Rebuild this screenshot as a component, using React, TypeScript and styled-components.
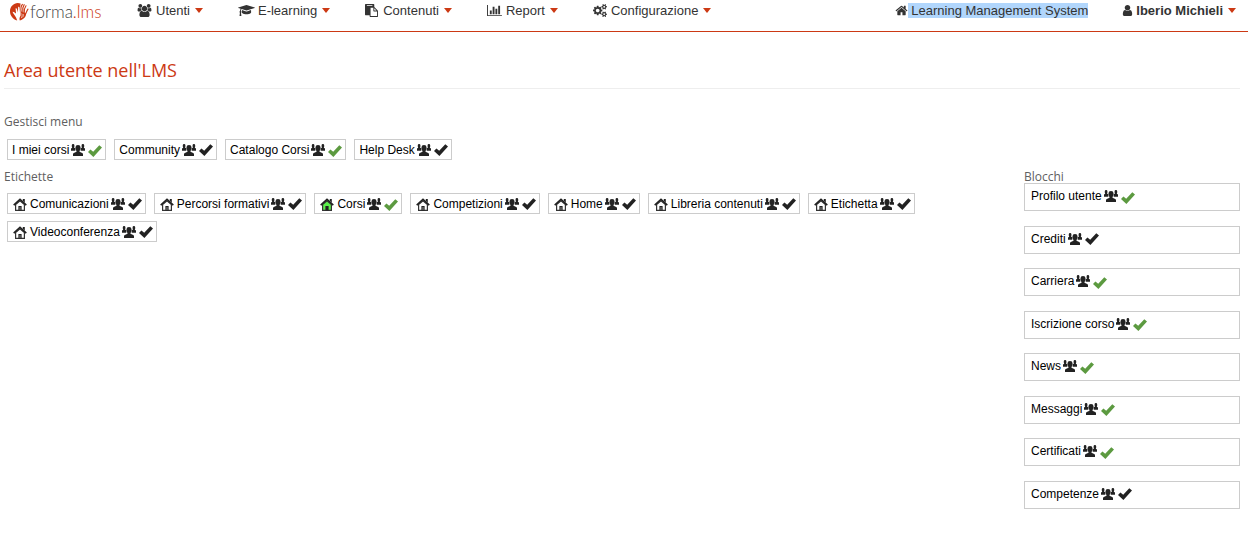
import React from "react";
import styled, { createGlobalStyle } from "styled-components";

const accent = "#cc3914";
const ink = "#333333";

const GlobalStyle = createGlobalStyle`
  * { box-sizing: border-box; }
  body { margin: 0; background: #fff; color: #000; font: 12px/16px "Liberation Sans", Arial, sans-serif; }
  button { font: inherit; color: inherit; background: none; border: 0; padding: 0; cursor: pointer; }
  a { color: inherit; text-decoration: none; }
  ul { list-style: none; margin: 0; padding: 0; }
  svg { display: block; flex: none; }
`;

const Header = styled.header`
  display: flex;
  align-items: flex-start;
  height: 32px;
  padding: 0 12px 0 8px;
  border-bottom: 1px solid ${accent};
  color: ${ink};
  font-size: 13px;
  line-height: 15px;
`;

const Logo = styled.a`
  display: flex;
  align-items: center;
  width: 129px;
  height: 24px;
  font: 300 17px/20px Lato, sans-serif;
  color: #444;
`;

const LogoAccent = styled.span`
  color: ${accent};
`;

const Nav = styled.nav`
  display: flex;
  gap: 35px;
  flex: 1;
  padding-top: 3px;
`;

const MenuButton = styled.button<{ $bold?: boolean }>`
  display: flex;
  align-items: center;
  height: 15px;
  font-weight: ${(p) => (p.$bold ? 700 : 400)};
  white-space: nowrap;
`;

const MenuLabel = styled.span<{ $gap: number }>`
  padding: 0 5px 0 ${(p) => p.$gap}px;
`;

const Caret = styled.span`
  border: 4px solid transparent;
  border-top: 5px solid ${accent};
  border-bottom: 0;
`;

const UserArea = styled.div`
  display: flex;
  gap: 33px;
  padding-top: 3px;
`;

const PlatformLink = styled.a`
  display: flex;
  align-items: center;
  height: 15px;
  white-space: nowrap;
`;

const Selected = styled.span`
  background: #b1d6fc;
  padding-left: 3px;
`;

const Main = styled.main`
  padding: 27px 8px 16px 4px;
`;

const Title = styled.h1`
  margin: 0 0 24px;
  padding-bottom: 7px;
  border-bottom: 1px solid #eee;
  color: ${accent};
  font: 400 18px/22px "Open Sans", sans-serif;
`;

const SectionTitle = styled.h2`
  margin: 0;
  color: #606060;
  font: 400 12px/17px "Open Sans", sans-serif;
`;

const Columns = styled.div`
  display: flex;
  align-items: flex-start;
  justify-content: space-between;
  padding-top: 8px;
`;

const LabelsColumn = styled.section`
  width: 75%;
`;

const BlocksColumn = styled.section`
  width: 216px;
`;

const ChipList = styled.ul<{ $top: number }>`
  display: flex;
  flex-wrap: wrap;
  gap: 7px 8px;
  padding: ${(p) => p.$top}px 3px 0;
`;

const Chip = styled.li`
  display: flex;
  align-items: center;
  height: 21px;
  padding: 0 3px 0 4px;
  border: 1px solid #ccc;
  white-space: nowrap;
`;

const BlockList = styled.ul`
  display: flex;
  flex-direction: column;
  justify-content: space-between;
  min-height: 326px;
  margin-top: -2px;
`;

const Block = styled.li`
  display: flex;
  align-items: center;
  height: 28px;
  padding: 0 6px 2px;
  border: 1px solid #ccc;
`;

const HomeSlot = styled.span`
  padding: 2px 3px 0 1px;
`;

const ItemLabel = styled.span`
  padding-right: 2px;
`;

const IconButton = styled.button<{ $low?: boolean }>`
  display: flex;
  margin-right: 3px;
  padding-top: ${(p) => (p.$low ? 3 : 0)}px;

  &:last-child {
    margin-right: 0;
  }
`;

const glyphs = {
  users: {
    w: 2048,
    d: "M657 896q-162 5-265 128h-134q-82 0-138-40.5t-56-118.5q0-353 124-353 6 0 43.5 21t97.5 42.5 119 21.5q67 0 133-23-5 37-5 66 0 139 81 256zm1071 637q0 120-73 189.5t-194 69.5h-874q-121 0-194-69.5t-73-189.5q0-53 3.5-103.5t14-109 26.5-108.5 43-97.5 62-81 85.5-53.5 111.5-20q10 0 43 21.5t73 48 107 48 135 21.5 135-21.5 107-48 73-48 43-21.5q61 0 111.5 20t85.5 53.5 62 81 43 97.5 26.5 108.5 14 109 3.5 103.5zm-1024-1277q0 106-75 181t-181 75-181-75-75-181 75-181 181-75 181 75 75 181zm704 384q0 159-112.5 271.5t-271.5 112.5-271.5-112.5-112.5-271.5 112.5-271.5 271.5-112.5 271.5 112.5 112.5 271.5zm576 225q0 78-56 118.5t-138 40.5h-134q-103-123-265-128 81-117 81-256 0-29-5-66 66 23 133 23 59 0 119-21.5t97.5-42.5 43.5-21q124 0 124 353zm-128-609q0 106-75 181t-181 75-181-75-75-181 75-181 181-75 181 75 75 181z",
  },
  cap: {
    w: 2304,
    d: "M1774 836l18 316q4 69-82 128t-235 93.5-323 34.5-323-34.5-235-93.5-82-128l18-316 574 181q22 7 48 7t48-7zm530-324q0 23-22 31l-1120 352q-4 1-10 1t-10-1l-652-206q-43 34-71 111.5t-34 178.5q63 36 63 109 0 69-58 107l58 433q2 14-8 25-9 11-24 11h-192q-15 0-24-11-10-11-8-25l58-433q-58-38-58-107 0-73 65-111 11-207 98-330l-333-104q-22-8-22-31t22-31l1120-352q4-1 10-1t10 1l1120 352q22 8 22 31z",
  },
  paste: {
    w: 1792,
    d: "M768 1664h896v-640h-416q-40 0-68-28t-28-68v-416h-384v1152zm256-1440v-64q0-13-9.500-22.500t-22.500-9.500h-704q-13 0-22.500 9.500t-9.500 22.500v64q0 13 9.500 22.500t22.500 9.500h704q13 0 22.500-9.500t9.500-22.500zm256 672h299l-299-299v299zm512 128v672q0 40-28 68t-68 28h-960q-40 0-68-28t-28-68v-160h-544q-40 0-68-28t-28-68v-1344q0-40 28-68t68-28h1088q40 0 68 28t28 68v328q21 13 36 28l408 408q28 28 48 76t20 88z",
  },
  chart: {
    w: 2048,
    d: "M640 896v512h-256v-512h256zm384-512v1024h-256v-1024h256zm1024 1152v128h-2048v-1536h128v1408h1920zm-640-896v768h-256v-768h256zm384-384v1152h-256v-1152h256z",
  },
  cogs: {
    w: 1920,
    d: "M896 896q0-106-75-181t-181-75-181 75-75 181 75 181 181 75 181-75 75-181zm768 512q0-52-38-90t-90-38-90 38-38 90q0 53 37.5 90.5t90.5 37.5 90.5-37.5 37.5-90.5zm0-1024q0-52-38-90t-90-38-90 38-38 90q0 53 37.5 90.5t90.5 37.5 90.5-37.5 37.5-90.5zm-384 421v185q0 10-7 19.5t-16 10.5l-155 24q-11 35-32 76 34 48 90 115 7 11 7 20 0 12-7 19-23 30-82.5 89.5t-78.5 59.5q-11 0-21-7l-115-90q-37 19-77 31-11 108-23 155-7 24-30 24h-186q-11 0-20-7.5t-10-17.5l-23-153q-34-10-75-31l-118 89q-7 7-20 7-11 0-21-8-144-133-144-160 0-9 7-19 10-14 41-53t47-61q-23-44-35-82l-152-24q-10-1-17-9.5t-7-19.5v-185q0-10 7-19.5t16-10.5l155-24q11-35 32-76-34-48-90-115-7-11-7-20 0-12 7-20 22-30 82-89t79-59q11 0 21 7l115 90q34-18 77-32 11-108 23-154 7-24 30-24h186q11 0 20 7.5t10 17.5l23 153q34 10 75 31l118-89q8-7 20-7 11 0 21 8 144 133 144 160 0 8-7 19-12 16-42 54t-45 60q23 48 34 82l152 23q10 2 17 10.5t7 19.5zm640 533v140q0 16-149 31-12 27-30 52 51 113 51 138 0 4-4 7-122 71-124 71-8 0-46-47t-52-68q-20 2-30 2t-30-2q-14 21-52 68t-46 47q-2 0-124-71-4-3-4-7 0-25 51-138-18-25-30-52-149-15-149-31v-140q0-16 149-31 13-29 30-52-51-113-51-138 0-4 4-7 4-2 35-20t59-34 30-16q8 0 46 46.5t52 67.5q20-2 30-2t30 2q51-71 92-112l6-2q4 0 124 70 4 3 4 7 0 25-51 138 17 23 30 52 149 15 149 31zm0-1024v140q0 16-149 31-12 27-30 52 51 113 51 138 0 4-4 7-122 71-124 71-8 0-46-47t-52-68q-20 2-30 2t-30-2q-14 21-52 68t-46 47q-2 0-124-71-4-3-4-7 0-25 51-138-18-25-30-52-149-15-149-31v-140q0-16 149-31 13-29 30-52-51-113-51-138 0-4 4-7 4-2 35-20t59-34 30-16q8 0 46 46.5t52 67.5q20-2 30-2t30 2q51-71 92-112l6-2q4 0 124 70 4 3 4 7 0 25-51 138 17 23 30 52 149 15 149 31z",
  },
  home: {
    w: 1792,
    d: "M1472 992v480q0 26-19 45t-45 19h-384v-384h-256v384h-384q-26 0-45-19t-19-45v-480q0-1 .5-3t.5-3l575-474 575 474q1 2 1 6zm223-69l-62 74q-8 9-21 11h-3q-13 0-21-7l-692-577-692 577q-12 8-24 7-13-2-21-11l-62-74q-8-10-7-23.5t11-21.5l719-599q32-26 76-26t76 26l244 204v-195q0-14 9-23t23-9h192q14 0 23 9t9 23v408l219 182q10 8 11 21.5t-7 23.5z",
  },
  user: {
    w: 1792,
    d: "M1536 1399q0 109-62.5 187t-150.5 78h-854q-88 0-150.5-78t-62.5-187q0-85 8.5-160.5t31.5-152 58.5-131 94-89 134.5-34.5q131 128 313 128t313-128q76 0 134.5 34.5t94 89 58.5 131 31.5 152 8.5 160.5zm-256-887q0 159-112.5 271.5t-271.5 112.5-271.5-112.5-112.5-271.5 112.5-271.5 271.5-112.5 271.5 112.5 112.5 271.5z",
  },
};

type GlyphName = keyof typeof glyphs;

const Glyph = ({ name }: { name: GlyphName }) => (
  <svg width={Math.round((glyphs[name].w / 1792) * 13)} height="13" viewBox={`0 0 ${glyphs[name].w} 1792`} fill="currentColor" aria-hidden="true">
    <path d={glyphs[name].d} />
  </svg>
);

const LogoMark = () => (
  <svg width="22" height="20" viewBox="0 0 22 20" aria-hidden="true">
    <path d="M12.600 1.600C7.500-.6 2 3.600 2 9.200c0 4.600 3 8 7.200 9.200C8.600 16.600 7.800 15 6.800 13.600 5.800 12.200 4.800 11 4.600 9.800c.8-.4 2 .6 3.400 1.800L7.600 6.400c.8-.5 1.300.3 1.500 1.200l.7 3L10.200 5c.8-.5 1.400.2 1.400 1.200L11.500 10.400z" fill={accent} />
    <path d="M13.200 9.800C12.600 7 13 4.200 14.400 2.400M14.800 10.200C14.200 7.200 14.800 4.800 16.200 2.600M16.200 10.600C16 8 16.600 5.800 18 3.800M17.400 12.200C18.200 10.800 18.800 8.800 20 7.200" fill="none" stroke={accent} strokeWidth="1.100" strokeLinecap="round" />
    <path d="M12.600 9.500l4.600 1.300 1 .9c-.5 3.200-2 5.200-6.400 6.900-.8-2 .1-3.600.8-5z" fill={accent} />
    <path d="M13.600 11.500c.8 1.400.6 3-.4 4.600M15.200 12c.4 1.200.2 2.200-.6 3.300" fill="none" stroke="#fff" strokeWidth=".6" />
  </svg>
);

const GroupIcon = () => (
  <svg width="14" height="12" viewBox="0 0 14 12" fill="#222" aria-hidden="true">
    <path d="M.8 1.200Q.8 0 2.100 0t1.300 1.200v1.300L3 3.700l1.300.4v2.700H0V4.500l1.200-.8L.8 2.500zM10.600 1.200Q10.600 0 11.900 0t1.300 1.200v1.300l-.4 1.200 1.200.8v2.300H9.700V4.100l1.300-.4-.4-1.200z" />
    <path d="M4.500 3.200Q4.500 1 7 1t2.500 2.200v1.600Q9.300 6.300 8.500 7v.8l2.700 1.200q.8.400.8 1.200V12H2v-1.800q0-.8.800-1.200l2.700-1.200V7q-.8-.7-1-2.200z" />
  </svg>
);

const CheckIcon = ({ on }: { on?: boolean }) => (
  <svg width="14" height="12" viewBox="0 0 14 12" fill={on ? "#5c9a40" : "#222"} aria-hidden="true">
    <path d="M0 6.900l2.400-2.500 2.800 2.300L11.300.2 14 2.500 5.400 12z" />
  </svg>
);

const HouseIcon = ({ active }: { active?: boolean }) => (
  <svg width="14" height="13" viewBox="0 0 14 13" aria-hidden="true">
    <path d="M2.600 6.500L7 2.700l4.400 3.800v5.900H2.600z" fill={active ? "#5cf04c" : "#fff"} stroke="#333" strokeWidth="1.200" />
    <path d="M.7 7.100L7 1.300l6.300 5.800" fill="none" stroke="#222" strokeWidth="1.600" />
    <path d="M9.800 1h2v3.800l-2-2zM5.400 8h3.200v4.500H5.400z" fill="#222" />
    {!active && <path d="M6.500 9h1v3h-1z" fill="#888" />}
  </svg>
);

type Entry = { label: string; on?: boolean };

const menus: { label: string; icon: GlyphName; gap: number }[] = [
  { label: "Utenti", icon: "users", gap: 4 },
  { label: "E-learning", icon: "cap", gap: 3 },
  { label: "Contenuti", icon: "paste", gap: 5 },
  { label: "Report", icon: "chart", gap: 4 },
  { label: "Configurazione", icon: "cogs", gap: 4 },
];

const menuEntries: Entry[] = [
  { label: "I miei corsi", on: true },
  { label: "Community" },
  { label: "Catalogo Corsi", on: true },
  { label: "Help Desk" },
];

const tagEntries: Entry[] = [
  { label: "Comunicazioni" },
  { label: "Percorsi formativi" },
  { label: "Corsi", on: true },
  { label: "Competizioni" },
  { label: "Home" },
  { label: "Libreria contenuti" },
  { label: "Etichetta" },
  { label: "Videoconferenza" },
];

const blockEntries: Entry[] = [
  { label: "Profilo utente", on: true },
  { label: "Crediti" },
  { label: "Carriera", on: true },
  { label: "Iscrizione corso", on: true },
  { label: "News", on: true },
  { label: "Messaggi", on: true },
  { label: "Certificati", on: true },
  { label: "Competenze" },
];

const EntryContent = ({ label, on }: Entry) => (
  <>
    <ItemLabel>{label}</ItemLabel>
    <IconButton type="button" aria-label={`Utenti: ${label}`}>
      <GroupIcon />
    </IconButton>
    <IconButton type="button" $low={on} aria-label={`Attiva: ${label}`} aria-pressed={!!on}>
      <CheckIcon on={on} />
    </IconButton>
  </>
);

export default function App() {
  return (
    <>
      <GlobalStyle />
      <Header>
        <Logo href="#">
          <LogoMark />
          <span>forma<LogoAccent>.lms</LogoAccent></span>
        </Logo>
        <Nav>
          {menus.map((m) => (
            <MenuButton key={m.label} type="button">
              <Glyph name={m.icon} />
              <MenuLabel $gap={m.gap}>{m.label}</MenuLabel>
              <Caret />
            </MenuButton>
          ))}
        </Nav>
        <UserArea>
          <PlatformLink href="#">
            <Glyph name="home" />
            <Selected>Learning Management System</Selected>
          </PlatformLink>
          <MenuButton type="button" $bold>
            <Glyph name="user" />
            <MenuLabel $gap={2}>Iberio Michieli</MenuLabel>
            <Caret />
          </MenuButton>
        </UserArea>
      </Header>
      <Main>
        <Title>Area utente nell'LMS</Title>
        <SectionTitle>Gestisci menu</SectionTitle>
        <ChipList $top={9}>
          {menuEntries.map((e) => (
            <Chip key={e.label}>
              <EntryContent {...e} />
            </Chip>
          ))}
        </ChipList>
        <Columns>
          <LabelsColumn>
            <SectionTitle>Etichette</SectionTitle>
            <ChipList $top={8}>
              {tagEntries.map((e) => (
                <Chip key={e.label}>
                  <HomeSlot>
                    <HouseIcon active={e.on} />
                  </HomeSlot>
                  <EntryContent {...e} />
                </Chip>
              ))}
            </ChipList>
          </LabelsColumn>
          <BlocksColumn>
            <SectionTitle>Blocchi</SectionTitle>
            <BlockList>
              {blockEntries.map((e) => (
                <Block key={e.label}>
                  <EntryContent {...e} />
                </Block>
              ))}
            </BlockList>
          </BlocksColumn>
        </Columns>
      </Main>
    </>
  );
}
